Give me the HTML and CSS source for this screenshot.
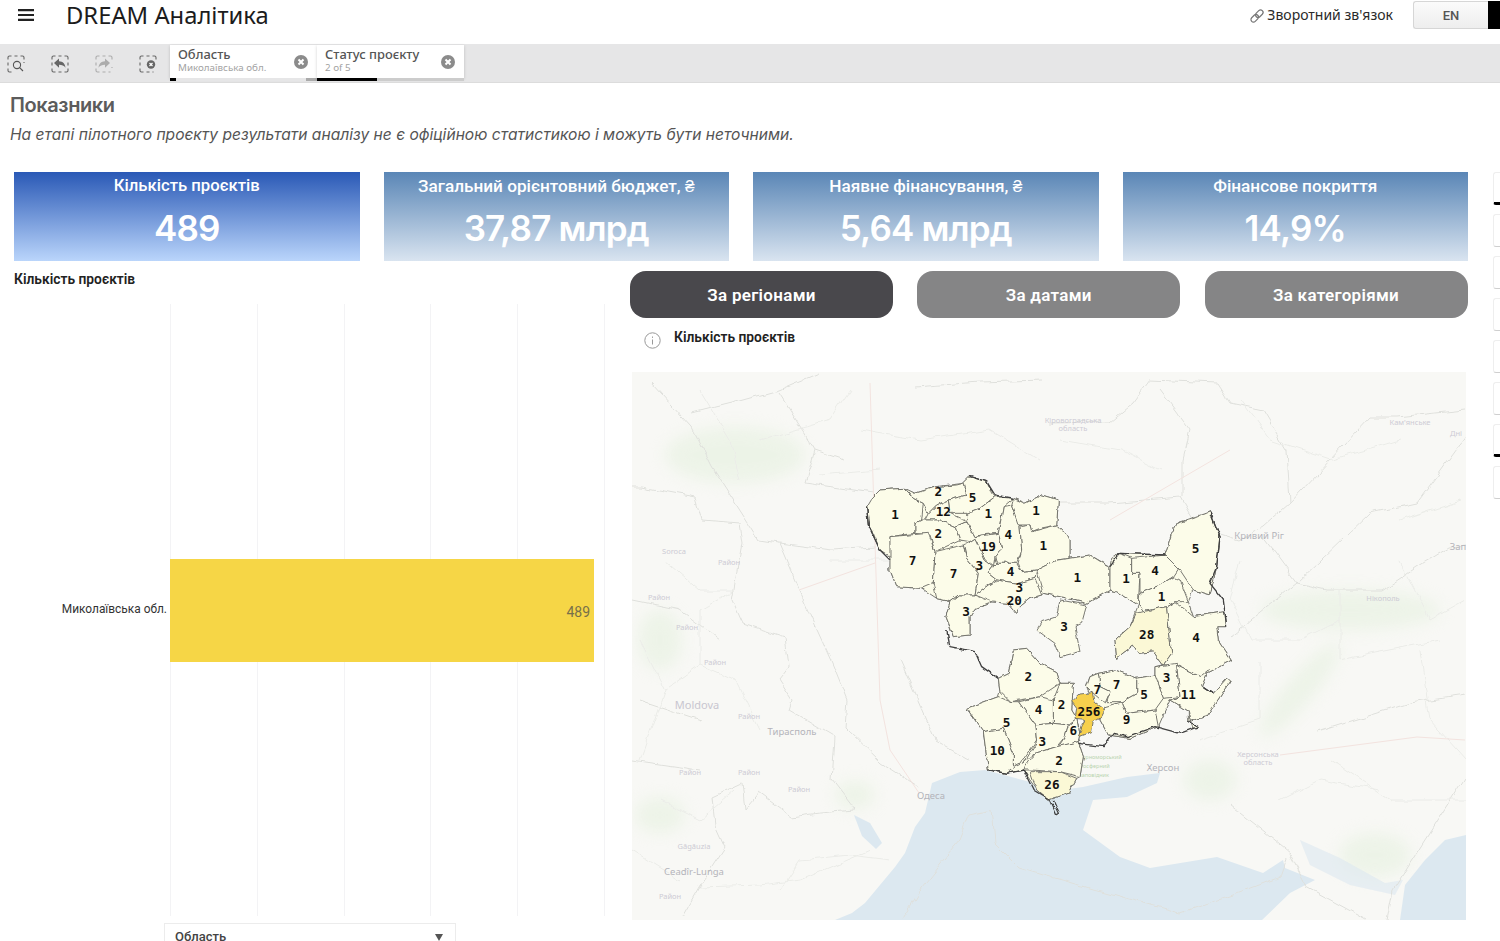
FILE: index.html
```html
<!DOCTYPE html>
<html lang="uk">
<head>
<meta charset="utf-8">
<title>DREAM Аналітика</title>
<link rel="stylesheet" href="styles.css">
</head>
<body>
<header class="topbar">
  <div class="brand">
    <svg class="burger" width="16" height="12" viewBox="0 0 16 12"><path d="M0 1.2h16M0 6h16M0 10.8h16"/></svg>
    <h1 class="app-title">DREAM Аналітика</h1>
  </div>
  <div class="top-actions">
    <svg class="link-icon" width="16" height="16" viewBox="0 0 16 16"><g transform="rotate(-45 8 8)"><rect x="0.5" y="5.5" width="8.5" height="5" rx="2.5"/><rect x="7" y="5.5" width="8.5" height="5" rx="2.5"/></g></svg>
    <span class="feedback">Зворотний зв'язок</span>
    <button class="lang">EN</button>
    <span class="lang-active"></span>
  </div>
</header>

<section class="filterbar">
  <div class="tools">
    <svg class="tool" width="18" height="18" viewBox="0 0 18 18"><path class="dash" d="M1 4.500V2.500A1.500 1.500 0 0 1 2.500 1H4.500M7.500 1h3M13.500 1h2A1.500 1.500 0 0 1 17 2.500V4.500M1 7.500v3M1 13.500v2A1.500 1.500 0 0 0 2.500 17H4.500M17 7v1"/><circle class="lens" cx="10" cy="10" r="3.600"/><path class="lens" d="M12.600 12.600L16 16"/></svg>
    <svg class="tool" width="18" height="18" viewBox="0 0 18 18"><path class="dash" d="M1 4.500V2.500A1.500 1.500 0 0 1 2.500 1H4.500M7.500 1h3M13.500 1h2A1.500 1.500 0 0 1 17 2.500V4.500M1 7.500v3M17 7.500v3M1 13.500v2A1.500 1.500 0 0 0 2.500 17H4.500M7.500 17h3M13.500 17h2A1.500 1.500 0 0 0 17 15.500V13.500"/><path class="solid" d="M3 8l5-4.500v2.800c4 .2 6 2.500 6.500 6.500-1.500-2.200-3.500-3-6.500-3v3z"/></svg>
    <svg class="tool tool-off" width="18" height="18" viewBox="0 0 18 18"><path class="dash" d="M1 4.500V2.500A1.500 1.500 0 0 1 2.500 1H4.500M7.500 1h3M13.500 1h2A1.500 1.500 0 0 1 17 2.500V4.500M1 7.500v3M17 12v1M1 13.500v2A1.500 1.500 0 0 0 2.500 17H4.500M7.500 17h3M13.500 17h2"/><path class="solid" d="M15 8l-5-4.500v2.800c-4 .2-6 2.500-6.500 6.500 1.500-2.200 3.500-3 6.500-3v3z"/></svg>
    <svg class="tool" width="18" height="18" viewBox="0 0 18 18"><path class="dash" d="M1 4.500V2.500A1.500 1.500 0 0 1 2.500 1H4.500M7.500 1h3M13.500 1h2A1.500 1.500 0 0 1 17 2.500V4.500M1 7.500v3M1 13.500v2A1.500 1.500 0 0 0 2.500 17H4.500M7.500 17h3M13.500 17h1"/><circle class="solid" cx="12" cy="9.500" r="4.200"/><path class="cross" d="M10.500 8l3 3M13.500 8l-3 3"/></svg>
  </div>
  <div class="chip chip-a">
    <div class="chip-text"><span class="chip-label">Область</span><span class="chip-sub">Миколаївська обл.</span></div>
    <svg class="chip-x" width="14" height="14" viewBox="0 0 14 14"><circle cx="7" cy="7" r="7"/><path d="M4.500 4.500l5 5M9.500 4.500l-5 5"/></svg>
    <span class="chip-progress chip-progress-a"></span>
  </div>
  <div class="chip chip-b">
    <div class="chip-text"><span class="chip-label">Статус проєкту</span><span class="chip-sub">2 of 5</span></div>
    <svg class="chip-x" width="14" height="14" viewBox="0 0 14 14"><circle cx="7" cy="7" r="7"/><path d="M4.500 4.500l5 5M9.500 4.500l-5 5"/></svg>
    <span class="chip-progress chip-progress-b"></span>
  </div>
</section>

<div class="page">
  <main class="content">
    <h2 class="heading">Показники</h2>
    <p class="note">На етапі пілотного проєкту результати аналізу не є офіційною статистикою і можуть бути неточними.</p>

    <section class="kpis">
      <article class="kpi kpi-main"><div class="kpi-title kpi-title-main">Кількість проєктів</div><div class="kpi-value">489</div></article>
      <article class="kpi"><div class="kpi-title">Загальний орієнтовний бюджет, ₴</div><div class="kpi-value">37,87 млрд</div></article>
      <article class="kpi"><div class="kpi-title">Наявне фінансування, ₴</div><div class="kpi-value">5,64 млрд</div></article>
      <article class="kpi"><div class="kpi-title">Фінансове покриття</div><div class="kpi-value">14,9%</div></article>
    </section>

    <section class="panels">
      <div class="panel-left">
        <div class="chart-title chart-title-left">Кількість проєктів</div>
        <div class="chart">
          <div class="cat-col"><span class="cat">Миколаївська обл.</span></div>
          <div class="plot">
            <div class="bar" style="width:424px"><span class="bar-value">489</span></div>
          </div>
        </div>
        <div class="select"><span>Область</span><span class="select-arrow"></span></div>
      </div>

      <div class="panel-right">
        <div class="tabs">
          <button class="tab tab-active">За регіонами</button>
          <button class="tab">За датами</button>
          <button class="tab">За категоріями</button>
        </div>
        <div class="map-head">
          <svg class="info" width="17" height="17" viewBox="0 0 17 17"><circle cx="8.500" cy="8.500" r="7.700"/><path d="M8.500 7.500v5M8.500 4.500v1.400"/></svg>
          <span class="chart-title">Кількість проєктів</span>
        </div>
        <div class="map">
          <svg class="map-svg" width="834" height="548" viewBox="632 372 834 548">
            <defs>
              <filter id="wobble" filterUnits="userSpaceOnUse" x="-60" y="-60" width="1320" height="1180">
                <feTurbulence type="fractalNoise" baseFrequency="0.045" numOctaves="2" seed="7"/>
                <feDisplacementMap in="SourceGraphic" scale="13" xChannelSelector="R" yChannelSelector="G"/>
              </filter>
              <filter id="wiggle" filterUnits="userSpaceOnUse" x="632" y="372" width="834" height="548">
                <feTurbulence type="fractalNoise" baseFrequency="0.07" numOctaves="2" seed="3"/>
                <feDisplacementMap in="SourceGraphic" scale="7" xChannelSelector="R" yChannelSelector="G"/>
              </filter>
            </defs>
            <g class="basemap">
              <rect class="land" x="632" y="372" width="834" height="548"/>
              <g class="green">
                <ellipse cx="735" cy="455" rx="70" ry="28"/><ellipse cx="660" cy="815" rx="25" ry="18"/><ellipse cx="1350" cy="610" rx="90" ry="20"/><ellipse cx="1300" cy="690" rx="60" ry="14" transform="rotate(-50 1300 690)"/><ellipse cx="1375" cy="855" rx="36" ry="22"/><ellipse cx="1210" cy="780" rx="26" ry="20"/><ellipse cx="660" cy="640" rx="22" ry="30"/><ellipse cx="855" cy="795" rx="20" ry="14"/>
              </g>
              <path class="sea" d="M985 770L960 772 932 783 925 813 915 827 905 853 895 867 865 903 852 913 835 920H1262L1290 893 1315 880 1285 868 1283 860 1263 873 1217 857 1150 868 1120 857 1083 830 1093 800 1127 797 1157 783 1160 773 1127 777 1083 787 1060 790Z"/>
              <path class="sea" d="M854 815L870 823 882 843 876 849 862 836Z"/>
              <path class="sea sea-pale" d="M1300 840L1340 858 1385 883 1403 880 1395 895 1350 885 1310 865Z"/>
              <path class="sea" d="M1466 835L1445 840 1425 860 1405 885 1400 920H1466Z"/>
              <g class="roads" filter="url(#wiggle)">
                <path d="M652 383L692 427 712 467 759 540 779 543 832 550 875 547"/>
                <path d="M779 543L799 590 832 663 847 700 845 727 882 763 919 787"/>
                <path d="M692 413L732 403 779 390 819 373M779 393L815 450 845 460M815 450L805 483 875 493M915 387L980 382 1042 380"/>
                <path d="M1217 533L1240 540 1263 527 1290 503 1370 417 1397 417 1465 410"/>
                <path d="M1290 503L1287 450 1263 410 1230 403 1217 383 1150 380 1133 403 1110 422 1050 423"/>
                <path d="M1263 537L1297 583 1327 590 1383 590 1417 567 1450 547 1465 545M1297 583L1370 513 1417 503 1465 437M1297 583L1230 637"/>
                <path d="M1050 503L1110 503 1180 497 1193 520M1183 497L1183 460 1190 430 1160 390"/>
                <path d="M1050 877L1180 913 1233 895 1280 877 1287 857M1317 732L1410 703 1465 695M1465 777L1393 890 1387 920M1230 805L1290 853 1307 887 1367 920"/>
                <path d="M992 810L969 815 959 840 922 887 902 920M992 810L995 843 1019 867 1052 877"/>
                <path d="M632 487L642 487 695 497 702 520 739 523 742 543 732 600 742 623 785 637 789 667 779 680 792 700 789 710 835 737 832 780 855 810 819 813 792 817 759 793 745 810 742 783 712 797 715 825 725 847 699 887 682 917"/>
                <path d="M632 600L680 610 720 640M640 700L700 720M900 660L935 740 970 760M632 760L700 770"/>
              </g>
              <g class="roads roads-faint" filter="url(#wiggle)">
                <path d="M640 640L665 690 640 760M665 690L700 665 735 680 760 730M700 665L700 610 735 590M665 560L700 590 735 590M660 800L700 820 735 790M632 850L680 880M700 887L760 885 800 880 870 850"/>
                <path d="M780 890L800 860 850 855 890 860M830 560L900 560M820 475L880 470M760 440L830 420 850 390M700 390L730 440 740 480M860 430L920 440 990 430 1040 460"/>
                <path d="M1060 440L1120 450 1160 470M1240 400L1270 440 1330 460 1400 440M1240 560L1230 600 1250 640 1300 640 1340 620M1340 590L1340 660 1440 640M1400 520L1460 500M1400 560L1430 620 1466 600"/>
                <path d="M1260 660L1260 720 1200 740M1330 760L1390 800 1466 800M1420 650L1430 720 1466 760M1280 800L1320 780 1380 790"/>
              </g>
              <path class="red" d="M870 383L879 670 880 700 890 750 919 793M799 590L875 563M1280 755L1417 737 1465 740M1110 520L1230 450"/>
            </g>
            <g class="map-labels">
              <text x="697" y="709" class="country">Moldova</text><text x="931" y="799" class="city">Одеса</text><text x="1163" y="771" class="city">Херсон</text><text x="1259" y="539" class="city">Кривий Ріг</text><text x="1458" y="550" class="city">Зап</text><text x="1258" y="757">Херсонська</text><text x="1258" y="765">область</text><text x="1073" y="423">Кіровоградська</text><text x="1073" y="431">область</text><text x="1410" y="425">Кам'янське</text><text x="1456" y="436">Дні</text><text x="1383" y="601">Нікополь</text><text x="674" y="554">Soroca</text><text x="729" y="565">Район</text><text x="659" y="600">Район</text><text x="687" y="630">Район</text><text x="715" y="665">Район</text><text x="749" y="775">Район</text><text x="799" y="792">Район</text><text x="690" y="775">Район</text><text x="749" y="719">Район</text><text x="792" y="735" class="city">Тирасполь</text><text x="694" y="849">Găgăuzia</text><text x="694" y="875" class="city">Ceadîr-Lunga</text><text x="670" y="899">Район</text>
              <g class="reserve"><text x="1100" y="759">Чорноморський</text><text x="1094" y="768">біосферний</text><text x="1094" y="777">заповідник</text></g>
            </g>
            <g transform="translate(860 470) scale(.33333)">
              <g filter="url(#wobble)">
                <g class="rayons">
                  <polygon points="20,110 60,60 130,55 165,70 230,50 310,40 330,20 380,35 405,80 460,85 495,100 545,75 595,90 590,165 630,205 630,265 690,255 750,290 780,250 915,255 935,190 950,160 1050,125 1080,200 1070,290 1050,375 1000,360 985,395 1000,440 1095,425 1100,470 1070,470 1075,510 1115,570 1060,600 1020,620 1045,600 1025,645 1060,670 1100,625 1110,635 1060,710 1040,740 985,755 985,725 930,690 895,770 810,805 745,795 720,750 680,650 690,620 715,610 765,600 830,625 885,615 885,590 910,585 880,545 835,550 820,525 770,565 765,510 810,470 835,405 770,365 750,360 680,400 600,380 550,370 545,375 510,385 480,410 470,430 445,400 395,395 345,415 330,440 330,495 280,500 258,440 270,395 230,385 185,355 110,350 90,300 92,260 60,240 25,165"/>
                  <polygon points="415,625 445,610 460,540 500,535 540,580 590,605 600,640 640,640 635,720 650,745 660,795 655,815 670,860 660,920 650,925 625,970 565,990 530,960 490,900 440,910 385,900 370,785 320,715 415,680 420,665"/>
                  <polygon points="20,110 35,85 60,60 130,55 160,85 190,100 185,150 165,160 165,190 90,200 92,260 60,240 40,190 25,165"/>
                  <polygon points="135,55 165,70 230,50 290,45 310,40 320,75 265,90 230,105 205,130 190,100 160,85"/>
                  <polygon points="310,40 330,20 380,35 395,70 405,80 360,115 320,130 270,130 265,90 320,75"/>
                  <polygon points="205,130 230,105 265,90 270,130 320,155 285,170 240,150 195,150"/>
                  <polygon points="320,130 360,115 405,80 460,85 430,110 415,190 360,195 345,200 320,155"/>
                  <polygon points="165,160 185,150 240,150 285,170 300,210 225,245 210,195 165,190"/>
                  <polygon points="285,170 320,155 345,200 415,190 425,235 405,260 400,290 375,270 345,205 330,215 300,210"/>
                  <polygon points="430,110 455,105 480,170 485,240 470,280 410,280 405,260 425,235 415,190"/>
                  <polygon points="460,85 495,100 545,75 595,90 590,165 540,175 515,185 510,165 475,165 455,105"/>
                  <polygon points="480,170 510,165 515,185 590,165 630,205 630,265 590,270 530,300 485,305 475,280 485,240"/>
                  <polygon points="90,200 205,190 225,245 220,340 185,355 110,350 90,300"/>
                  <polygon points="225,245 310,225 320,265 355,310 345,375 295,375 270,395 230,385 220,340"/>
                  <polygon points="310,225 330,215 345,205 375,270 400,290 385,310 410,330 385,345 345,375 355,310 320,265"/>
                  <polygon points="385,310 400,290 410,280 470,280 485,305 530,300 525,325 475,340 410,330"/>
                  <polygon points="345,375 385,345 410,330 475,340 525,325 545,375 510,385 480,410 470,430 445,400 385,395"/>
                  <polygon points="270,395 295,375 345,375 395,395 345,415 330,440 330,495 280,500 270,470 258,440"/>
                  <polygon points="530,300 590,270 630,265 690,255 730,280 750,290 750,360 680,400 600,380 550,370"/>
                  <polygon points="600,390 680,405 665,460 645,470 660,545 600,560 585,520 530,480 545,455 590,440"/>
                  <polygon points="750,290 755,265 780,250 815,265 815,310 840,310 835,405 770,365 750,360"/>
                  <polygon points="815,265 915,255 960,290 940,320 900,345 840,370 840,310 815,310"/>
                  <polygon points="915,255 935,190 950,160 1005,145 1050,125 1080,200 1070,290 1050,375 1000,360 960,300"/>
                  <polygon points="840,370 900,345 940,320 960,330 985,395 945,395 920,410 850,425 835,405"/>
                  <polygon class="rayon-mid" points="850,425 920,410 935,550 910,585 880,545 835,550 820,525 770,565 765,510 810,470 830,430"/>
                  <polygon points="920,410 945,395 965,410 1000,440 1095,425 1100,470 1070,470 1075,510 1115,570 1060,600 1020,620 950,585 910,585 935,550"/>
                  <polygon points="885,590 950,580 960,680 910,685 885,620"/>
                  <polygon points="950,585 1020,620 1045,600 1025,645 1060,670 1100,625 1110,635 1060,710 1040,740 985,755 1015,770 995,775 985,725 930,690 960,680"/>
                  <polygon points="830,625 885,615 910,685 885,720 800,730 785,695 830,670"/>
                  <polygon points="715,610 765,600 830,625 830,670 785,695 740,695 750,665 720,650"/>
                  <polygon points="680,650 690,620 715,610 720,650 750,665 735,700 700,670"/>
                  <polygon points="735,710 785,695 800,730 885,720 895,770 810,805 745,795 720,750"/>
                  <polygon points="415,625 445,610 460,540 500,535 540,580 590,605 600,640 540,680 450,695 420,665"/>
                  <polygon points="580,690 600,640 640,640 635,720 650,745 625,765 580,760"/>
                  <polygon points="475,695 540,680 580,690 580,760 525,765"/>
                  <polygon points="320,715 415,680 450,695 475,695 525,765 530,810 480,880 460,890 460,850 430,775 370,785"/>
                  <polygon points="370,785 430,775 460,850 460,895 440,910 385,900"/>
                  <polygon points="525,765 580,760 625,765 615,800 590,830 525,850 490,880 530,815"/>
                  <polygon points="625,765 650,745 660,795 655,815 595,830 615,800"/>
                  <polygon points="525,850 590,830 655,815 670,860 660,920 600,905 510,900 490,900"/>
                  <polygon class="rayon-mid" points="510,905 600,905 650,925 625,970 565,990 530,960"/>
                  <polygon class="rayon-hot" points="635,695 660,672 700,668 705,700 735,720 725,740 700,755 695,785 655,800 675,748 645,745 650,715"/>
                </g>
                <g class="coast">
                  <path d="M20,110 25,165 60,240 90,270M260,480 270,530 345,545 365,590 415,625"/>
                  <path d="M385,900 440,910 490,900 520,960 570,990 590,1035 598,1030 580,990"/>
                  <path d="M655,820 730,830 760,790 800,800 885,770 960,790 1015,770 985,755M750,290 780,250 915,255"/>
                  <path d="M1050,125 1080,200 1070,290 1050,340 1090,390 1100,470M1030,650 1060,670M330,20 380,35 405,75 460,85"/>
                </g>
              </g>
              <g class="counts">
                <text x="105" y="135">1</text><text x="235" y="66">2</text><text x="338" y="82">5</text><text x="250" y="126">12</text><text x="385" y="132">1</text><text x="235" y="191">2</text><text x="385" y="231">19</text><text x="445" y="195">4</text><text x="528" y="122">1</text><text x="550" y="228">1</text><text x="158" y="272">7</text><text x="281" y="311">7</text><text x="358" y="288">3</text><text x="452" y="306">4</text><text x="478" y="352">3</text><text x="463" y="392">20</text><text x="318" y="425">3</text><text x="652" y="323">1</text><text x="612" y="470">3</text><text x="798" y="326">1</text><text x="885" y="303">4</text><text x="1007" y="236">5</text><text x="905" y="380">1</text><text x="860" y="494">28</text><text x="1008" y="503">4</text><text x="920" y="622">3</text><text x="985" y="673">11</text><text x="852" y="673">5</text><text x="770" y="643">7</text><text x="712" y="660">7</text><text x="800" y="748">9</text><text x="505" y="620">2</text><text x="605" y="704">2</text><text x="536" y="718">4</text><text x="440" y="757">5</text><text x="412" y="842">10</text><text x="547" y="816">3</text><text x="640" y="782">6</text><text x="597" y="873">2</text><text x="576" y="945">26</text><text x="687" y="724">256</text>
              </g>
            </g>
          </svg>
        </div>
      </div>
    </section>
  </main>

  <aside class="rail">
    <span class="rail-item rail-on"></span><span class="rail-item"></span><span class="rail-item"></span><span class="rail-item"></span><span class="rail-item"></span><span class="rail-item"></span><span class="rail-item rail-on"></span><span class="rail-item"></span>
  </aside>
</div>
</body>
</html>
```

FILE: styles.css
```css
* { box-sizing: border-box; }
html, body { margin: 0; height: 941px; overflow: hidden; background: #fff; }
body { font-family: "Roboto", "Liberation Sans", sans-serif; color: #222; }
button { font: inherit; cursor: pointer; }
h1, h2, p { margin: 0; }

.topbar { height: 44px; display: flex; justify-content: space-between; align-items: flex-start; }
.brand { display: flex; align-items: center; padding: 0 0 0 18px; height: 30px; }
.burger { stroke: #222; stroke-width: 2.200; fill: none; margin-right: 32px; }
.app-title { font: 400 23.800px "Noto Sans", sans-serif; color: #1c1c1c; }
.top-actions { display: flex; align-items: flex-start; padding-top: 1px; }
.link-icon { fill: none; stroke: #777; stroke-width: 1.200; margin: 7px 2px 0 0; }
.feedback { font: 400 14px "Noto Sans", sans-serif; line-height: 28px; margin-right: 20px; color: #2a2a2a; }
.lang { width: 75px; height: 28px; border: 1px solid #d6d6d6; border-right: 0; border-radius: 3px 0 0 3px; background: linear-gradient(#fbfbfb, #eeeeee); color: #555; font: 500 13px "Roboto", sans-serif; padding: 0; }
.lang-active { width: 12px; height: 28px; background: #000; }

.filterbar { height: 39px; background: #e6e6e7; border-bottom: 1px solid #dcdcdc; display: flex; align-items: flex-start; padding-top: 1px; }
.tools { width: 170px; padding: 10px 0 0 7px; display: flex; gap: 26px; }
.tool { flex: none; }
.dash { fill: none; stroke: #666; stroke-width: 1.100; }
.lens { fill: none; stroke: #555; stroke-width: 1.100; }
.solid { fill: #666; }
.cross { stroke: #fff; stroke-width: 1.200; fill: none; }
.tool-off { opacity: .45; }
.chip { width: 147px; height: 33px; background: #fff; position: relative; display: flex; justify-content: space-between; align-items: center; padding: 0 9px 0 8px; box-shadow: 0 1px 3px rgba(0,0,0,.18); }
.chip-text { display: flex; flex-direction: column; padding-bottom: 1px; }
.chip-label { font: 500 12.900px/13px "Noto Sans", sans-serif; color: #555; }
.chip-sub { font: 400 9.800px/13px "Noto Sans", sans-serif; color: #a3a3a3; }
.chip-x circle { fill: #8b8b8b; }
.chip-x path { stroke: #fff; stroke-width: 2; fill: none; }
.chip-progress { position: absolute; left: 0; right: 0; bottom: -3px; height: 3px; }
.chip-progress-a { background: linear-gradient(90deg, #000 6px, #e6e6e7 6px, #e6e6e7 136px, #aaa 136px); }
.chip-progress-b { background: linear-gradient(90deg, #000 60px, #ccc 60px); }

.page { display: flex; }
.content { width: 1486px; flex: none; padding: 9px 18px 0 10px; }
.heading { font: 600 20px/26px "Inter", sans-serif; color: #5c5c5c; letter-spacing: -.4px; }
.note { font: italic 400 15.600px/20px "Inter", sans-serif; color: #555; margin-top: 7px; }

.kpis { display: grid; grid-template-columns: repeat(4, 345.500px); column-gap: 24px; margin: 27px 0 0 4px; }
.kpi { height: 89px; text-align: center; color: #fff; background: linear-gradient(#5a86b6, #d9e4f0); }
.kpi-main { background: linear-gradient(#2a59b6, #bad5fb); }
.kpi-title { font: 500 17.200px/20px "Roboto", sans-serif; padding-top: 4px; }
.kpi-title-main { font-size: 16.700px; }
.kpi-value { font: 600 35px/44px "Inter", sans-serif; margin-top: 10px; letter-spacing: -.8px; }

.panels { display: flex; margin: 10px 0 0 4px; }
.panel-left { width: 616px; flex: none; }
.chart-title { font: 600 13.800px/18px "Roboto", sans-serif; color: #222; }
.chart-title-left { margin-top: -1px; }
.chart { display: flex; height: 612px; margin-top: 16px; }
.cat-col { width: 156px; flex: none; display: flex; align-items: center; justify-content: flex-end; padding: 0 3px 3px 0; }
.cat { font: 400 11.900px "Roboto", sans-serif; color: #333; }
.plot { width: 435px; display: flex; align-items: center; background: repeating-linear-gradient(90deg, #f3f3f5 0, #f3f3f5 1px, transparent 1px, transparent 86.800px); }
.bar { height: 103px; background: #f6d646; display: flex; align-items: center; justify-content: flex-end; padding: 3px 4px 0 0; }
.bar-value { font: 400 14px "Roboto", sans-serif; color: #77704a; }
.select { width: 292px; height: 30px; margin: 7px 0 0 150px; border: 1px solid #ececec; padding: 5px 12px 0 10px; display: flex; justify-content: space-between; font: 500 13px "Roboto", sans-serif; color: #444; }
.select-arrow { width: 0; height: 0; margin-top: 5px; border: 4.500px solid transparent; border-top: 7px solid #555; border-bottom: 0; }

.panel-right { width: 838px; flex: none; }
.tabs { display: grid; grid-template-columns: repeat(3, 263px); column-gap: 24.250px; }
.tab { height: 47px; border: 0; border-radius: 16px; background: #858586; color: #fff; font: 600 17px "Roboto", sans-serif; letter-spacing: .3px; padding: 1px 0 0; }
.tab-active { background: #49484c; }
.map-head { display: flex; align-items: flex-start; height: 54px; padding: 10px 0 0 14px; gap: 13px; }
.info { fill: none; stroke: #999; stroke-width: 1; margin-top: 4px; }
.map { margin-left: 2px; width: 834px; height: 548px; }
.map-svg { display: block; }
.basemap { filter: blur(.6px); }
.land { fill: #f8f8f5; }
.green { fill: #e2efdb; opacity: .5; filter: blur(8px); }
.sea { fill: #dce8f0; }
.sea-pale { opacity: .6; }
.roads { fill: none; stroke: #dfe0dc; stroke-width: 1; }
.roads-faint { stroke: #ebece8; }
.red { fill: none; stroke: #f3e3df; stroke-width: 1; }
.map-labels { font: 400 7.500px "Noto Sans", sans-serif; fill: #cdcbd4; text-anchor: middle; }
.map-labels .city { font-size: 9.500px; fill: #b4b4ba; }
.map-labels .country { font-size: 11px; fill: #c8c6d0; }
.map-labels .reserve { font-size: 5.500px; fill: #b8d4b0; }
.rayons polygon { fill: #fcfce9; stroke: #6f6f68; stroke-width: 2.800; stroke-linejoin: round; }
.rayons .rayon-mid { fill: #fbf8d6; }
.rayons .rayon-hot { fill: #f6d04e; }
.coast { fill: none; stroke: #3f3f3f; stroke-width: 4; stroke-linejoin: round; }
.counts { font: 700 38px "DejaVu Sans Mono", monospace; fill: #111; text-anchor: middle; dominant-baseline: central; }

.rail { width: 14px; flex: none; margin-top: 89px; display: flex; flex-direction: column; gap: 9px; padding-left: 7px; }
.rail-item { display: block; height: 33px; border: 1px solid #eeeeee; border-right: 0; border-bottom-color: #cfcfcf; border-radius: 3px 0 0 3px; }
.rail-on { border-bottom: 3px solid #000; }
```
